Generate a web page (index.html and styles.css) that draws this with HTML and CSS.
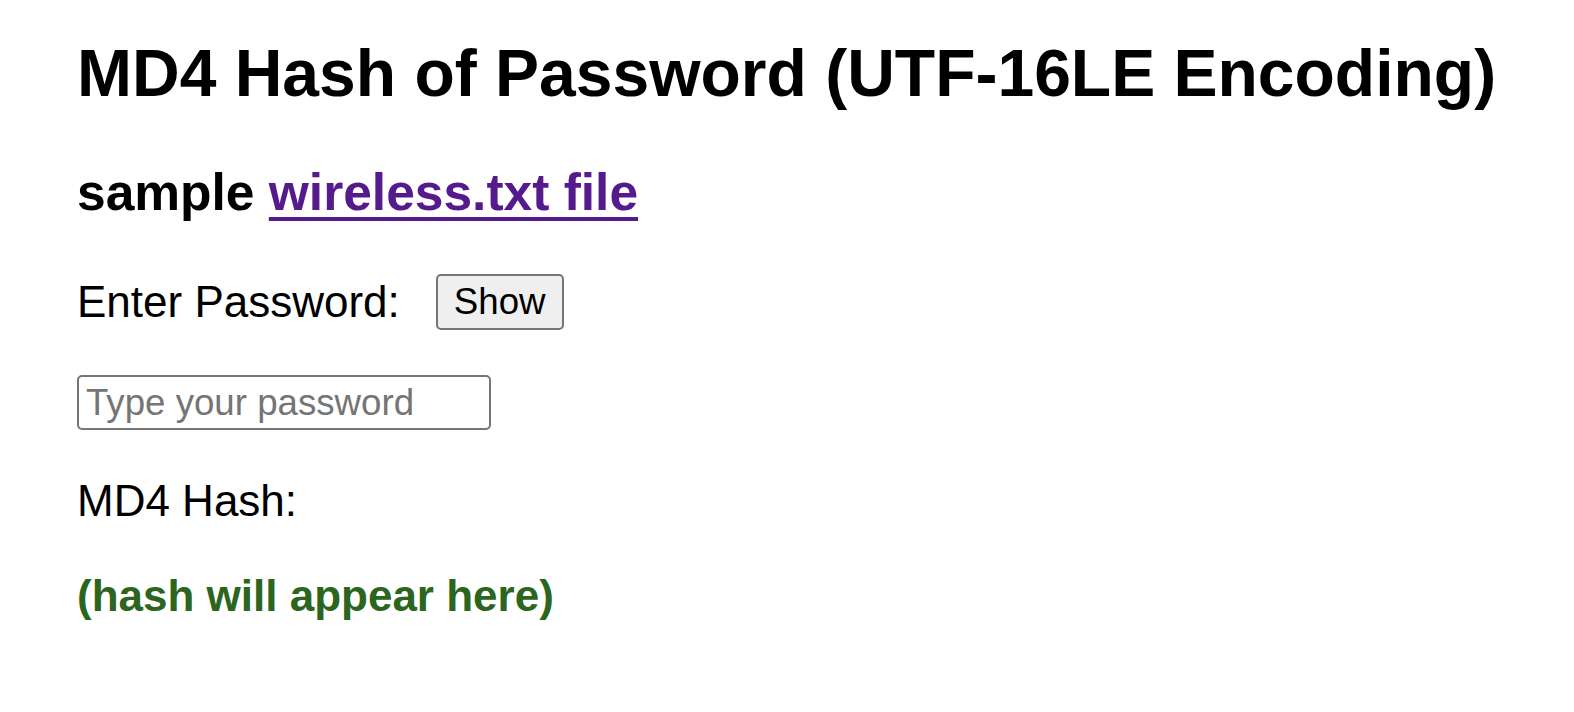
FILE: index.html
```html
<!DOCTYPE html>
<html lang="en">
<head>
<meta charset="utf-8">
<title>MD4 Hash of Password</title>
<link rel="stylesheet" href="styles.css">
</head>
<body>
<main class="page">
  <h1 class="title">MD4 Hash of Password (UTF-16LE Encoding)</h1>
  <h3 class="sample">sample <a class="sample-link" href="#">wireless.txt file</a></h3>
  <div class="pw-row">
    <label class="pw-label" for="pw">Enter Password:</label>
    <button class="show-btn" type="button">Show</button>
  </div>
  <input class="pw-input" id="pw" type="password" placeholder="Type your password">
  <p class="hash-label">MD4 Hash:</p>
  <p class="hash-out">(hash will appear here)</p>
</main>
</body>
</html>
```

FILE: styles.css
```css
html, body {
  margin: 0;
  padding: 0;
  background: #ffffff;
}

body {
  font-family: "Liberation Sans", Arial, sans-serif;
  color: #000000;
}

.page {
  padding: 35px 0 0 77px;
  display: flex;
  flex-direction: column;
  align-items: flex-start;
}

.title {
  font-size: 66px;
  font-weight: bold;
  line-height: normal;
  margin: 0;
}

.sample {
  font-size: 51.5px;
  font-weight: bold;
  line-height: normal;
  margin: 51px 0 0;
}

.sample-link {
  color: #551a8b;
  text-decoration: underline;
  text-decoration-thickness: 4px;
  text-underline-offset: 7px;
}

.pw-row {
  display: flex;
  align-items: center;
  margin-top: 52px;
}

.pw-label {
  font-size: 44px;
  line-height: normal;
}

.show-btn {
  margin-left: 36px;
  font-family: "Liberation Sans", Arial, sans-serif;
  font-size: 36.67px;
  line-height: normal;
  padding: 5px 16px;
  border: 2px solid #767676;
  border-radius: 5px;
  background: #efefef;
  color: #000000;
}

.pw-input {
  box-sizing: border-box;
  width: 414px;
  height: 55px;
  margin-top: 45px;
  font-family: "Liberation Sans", Arial, sans-serif;
  font-size: 36.67px;
  padding: 3px 7px;
  border: 2px solid #767676;
  border-radius: 5px;
  background: #ffffff;
  color: #000000;
}

.pw-input::placeholder {
  color: #757575;
}

.hash-label {
  font-size: 44px;
  line-height: normal;
  margin: 46px 0 0;
}

.hash-out {
  font-size: 44px;
  font-weight: bold;
  line-height: normal;
  color: #2b651e;
  margin: 45px 0 0;
}
```
